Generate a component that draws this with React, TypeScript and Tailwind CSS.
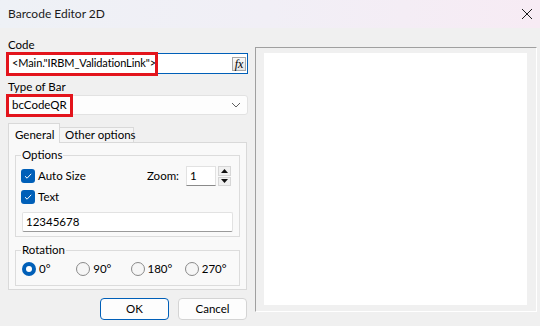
import React from 'react';

const font = { fontFamily: 'Lato, "Liberation Sans", Arial, sans-serif' };

function Check({ label }: { label: string }) {
  return (
    <div className="flex items-center h-[14px]">
      <div className="ml-[-1px] w-[14px] h-[14px] rounded-[3px] bg-[#005fb8] flex items-center justify-center">
        <svg width="10" height="10" viewBox="0 0 10 10">
          <path d="M2 5.2 L4.1 7.2 L8.2 2.8" fill="none" stroke="#fff" strokeWidth="1" />
        </svg>
      </div>
      <span className="ml-[3px] leading-[14px]">{label}</span>
    </div>
  );
}

function Radio({ label, checked }: { label: string; checked?: boolean }) {
  return (
    <div className="flex items-center w-[56px]">
      {checked ? (
        <div className="w-[14px] h-[14px] rounded-full bg-[#005fb8] flex items-center justify-center">
          <div className="w-[6px] h-[6px] rounded-full bg-white" />
        </div>
      ) : (
        <div className="w-[14px] h-[14px] rounded-full border border-[#8a8a8a] bg-[#f6f6f6]" />
      )}
      <span className="ml-[3px]">{label}</span>
    </div>
  );
}

export default function App() {
  return (
    <div className="w-[540px] h-[326px] bg-[#f0f0f0] text-[11.5px] text-black overflow-hidden" style={font}>
      {/* Title bar */}
      <div className="h-[28px] flex items-center justify-between pl-[8px] pr-[8px] bg-gradient-to-r from-[#eef1f6] via-[#f1eff6] to-[#f7ebf4]">
        <span className="text-[12px] text-[#1b1b1b]">Barcode Editor 2D</span>
        <svg width="12" height="12" viewBox="0 0 12 12" className="mr-[-1px]">
          <path d="M1 1 L11 11 M11 1 L1 11" stroke="#1b1b1b" strokeWidth="1" />
        </svg>
      </div>

      <div className="flex">
        {/* Left column */}
        <div className="w-[240px] ml-[8px] pt-[8px] flex flex-col">
          <div className="h-[17px] leading-[17px]">Code</div>
          <div className="relative h-[21px] bg-white border border-[#005fb8] flex items-center pl-[3px]">
            <span className="whitespace-nowrap text-[11px] tracking-[-0.1px]">&lt;Main."IRBM_ValidationLink"&gt;</span>
            <div className="absolute left-[-3px] top-[-2px] w-[152px] h-[24px] border-[3px] border-[#e3141c]" />
            <div className="absolute right-[1px] top-[3px] w-[14px] h-[14px] border border-[#a8a8a8] bg-gradient-to-b from-[#fafafa] to-[#e4e4e4] flex items-center justify-center">
              <span className="italic text-[12px] leading-none" style={{ fontFamily: '"Liberation Serif", serif' }}>fx</span>
            </div>
          </div>

          <div className="mt-[4px] h-[17px] leading-[17px]">Type of Bar</div>
          <div className="relative h-[20px] bg-[#fdfdfd] border border-[#e2e2e2] rounded-[3px] flex items-center justify-between pl-[3px] pr-[6px]">
            <span>bcCodeQR</span>
            <svg width="10" height="6" viewBox="0 0 10 6">
              <path d="M1 1 L5 5 L9 1" fill="none" stroke="#606060" strokeWidth="1" />
            </svg>
            <div className="absolute left-[-3px] top-[-2px] w-[67px] h-[23px] border-[3px] border-[#e3141c]" />
          </div>

          {/* Tabs */}
          <div className="mt-[7px] h-[20px] flex items-end">
            <div className="relative z-10 h-[20px] mb-[-1px] w-[52px] bg-[#f9f9f9] border border-b-0 border-[#d9d9d9] flex items-start pt-[2px] pl-[6px] whitespace-nowrap">
              General
            </div>
            <div className="h-[15px] w-[74px] bg-[#f5f5f5] border border-l-0 border-b-0 border-[#d9d9d9] flex items-center pl-[5px] whitespace-nowrap">
              Other options
            </div>
          </div>
          <div className="w-[239px] h-[148px] bg-[#f9f9f9] border border-[#d9d9d9] flex flex-col px-[6px]">
            {/* Options group */}
            <div className="relative mt-[12px] h-[82px] border border-[#dcdcdc] px-[6px] flex flex-col">
              <span className="absolute left-[5px] top-[-9px] px-[1px] bg-[#f9f9f9] leading-[16px]">Options</span>
              <div className="mt-[10px] h-[20px] flex items-center justify-between">
                <Check label="Auto Size" />
                <div className="flex items-center">
                  <span>Zoom:</span>
                  <div className="ml-[7px] w-[30px] h-[20px] bg-white border border-[#e2e2e2] border-b-[#8a8a8a] flex items-center pl-[3px]">1</div>
                  <div className="ml-[2px] w-[13px] h-[20px] flex flex-col gap-[1px] mr-[2px]">
                    <div className="flex-1 bg-[#f0f0f0] border border-[#d6d6d6] flex items-center justify-center">
                      <svg width="7" height="4" viewBox="0 0 7 4"><path d="M0 4 L3.5 0 L7 4 Z" fill="#111" /></svg>
                    </div>
                    <div className="flex-1 bg-[#f0f0f0] border border-[#d6d6d6] flex items-center justify-center">
                      <svg width="7" height="4" viewBox="0 0 7 4"><path d="M0 0 L3.5 4 L7 0 Z" fill="#111" /></svg>
                    </div>
                  </div>
                </div>
              </div>
              <div className="mt-[4px]">
                <Check label="Text" />
              </div>
              <div className="mt-[8px] h-[20px] bg-white border border-[#e2e2e2] border-b-[#9a9a9a] rounded-[2px] flex items-center pl-[3px]">
                12345678
              </div>
            </div>

            {/* Rotation group */}
            <div className="relative mt-[13px] h-[36px] border border-[#dcdcdc] pl-[6px] flex items-center pt-[2px]">
              <span className="absolute left-[5px] top-[-9px] px-[1px] bg-[#f9f9f9] leading-[16px]">Rotation</span>
              <Radio label="0°" checked />
              <Radio label="90°" />
              <Radio label="180°" />
              <Radio label="270°" />
            </div>
          </div>

          {/* Buttons */}
          <div className="mt-[8px] flex justify-end gap-[9px] pr-[1px]">
            <button className="w-[69px] h-[22px] rounded-[4px] bg-[#fdfdfd] border border-[#005fb8]">OK</button>
            <button className="w-[69px] h-[22px] rounded-[4px] bg-[#fdfdfd] border border-[#d4d4d4]">Cancel</button>
          </div>
        </div>

        {/* Preview panel */}
        <div className="ml-[7px] mt-[19px] w-[282px] h-[265px] border border-[#a0a0a0] border-r-white border-b-white pt-[5px] pl-[8px] pr-[9px] pb-[6px]">
          <div className="w-full h-full bg-white" />
        </div>
      </div>
    </div>
  );
}
